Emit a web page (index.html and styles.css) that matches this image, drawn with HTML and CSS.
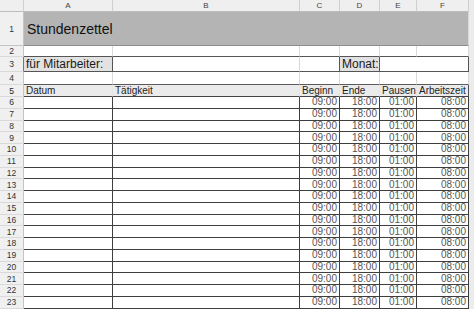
FILE: index.html
```html
<!DOCTYPE html>
<html lang="de">
<head>
    <meta charset="UTF-8">
    <meta name="viewport" content="width=device-width, initial-scale=1.0">
    <title>Stundenzettel</title>
    <link rel="stylesheet" href="styles.css">
</head>
<body>
    <div class="window">
        <table class="sheet">
            <colgroup>
                <col class="col-rh">
                <col class="col-a">
                <col class="col-b">
                <col class="col-c">
                <col class="col-d">
                <col class="col-e">
                <col class="col-f">
            </colgroup>
            <thead>
                <tr class="row-head">
                    <th class="corner"></th>
                    <th>A</th>
                    <th>B</th>
                    <th>C</th>
                    <th>D</th>
                    <th>E</th>
                    <th>F</th>
                </tr>
            </thead>
            <tbody id="rows">
                <tr class="row-title">
                    <td class="rh">1</td>
                    <td class="title" colspan="6">Stundenzettel</td>
                </tr>
                <tr class="row-2">
                    <td class="rh">2</td>
                    <td></td><td></td><td></td><td></td><td></td><td></td>
                </tr>
                <tr class="row-3">
                    <td class="rh">3</td>
                    <td class="label box">für Mitarbeiter:</td>
                    <td class="box"></td>
                    <td class="box"></td>
                    <td class="label box">Monat:</td>
                    <td class="box" colspan="2"></td>
                </tr>
                <tr class="row-4">
                    <td class="rh">4</td>
                    <td></td><td></td><td></td><td></td><td></td><td></td>
                </tr>
                <tr class="row-5">
                    <td class="rh">5</td>
                    <td>Datum</td>
                    <td>Tätigkeit</td>
                    <td>Beginn</td>
                    <td>Ende</td>
                    <td>Pausen</td>
                    <td>Arbeitszeit</td>
                </tr>
            </tbody>
        </table>
    </div>

    <script>
        // Fill rows 6-23 with the default shift
        const tbody = document.getElementById('rows');
        for (let n = 6; n <= 23; n++) {
            const tr = document.createElement('tr');
            tr.className = 'row-data';
            tr.innerHTML =
                '<td class="rh">' + n + '</td>' +
                '<td></td><td></td>' +
                '<td class="time">09:00</td>' +
                '<td class="time">18:00</td>' +
                '<td class="time">01:00</td>' +
                '<td class="time">08:00</td>';
            tbody.appendChild(tr);
        }
    </script>
</body>
</html>
```

FILE: styles.css
```css
body {
    margin: 0;
    padding: 0;
    background: #ffffff;
    font-family: "Liberation Sans", Arial, sans-serif;
    color: #222;
    overflow: hidden;
}
.window {
    width: 474px;
    height: 309px;
    overflow: hidden;
    background: #ececec;
}
.sheet {
    table-layout: fixed;
    border-collapse: separate;
    border-spacing: 0;
    width: 469px;
    background: #ffffff;
}
.col-rh { width: 24px; }
.col-a { width: 89px; }
.col-b { width: 187px; }
.col-c { width: 40px; }
.col-d { width: 40px; }
.col-e { width: 37px; }
.col-f { width: 52px; }

th, td {
    box-sizing: border-box;
    padding: 0 2px;
    border-right: 1px solid #d9d9d9;
    border-bottom: 1px solid #d9d9d9;
    white-space: nowrap;
    overflow: hidden;
    font-size: 10px;
    line-height: 10px;
    text-align: left;
}

/* column letters */
.row-head { height: 12px; }
.row-head th {
    background: #efefef;
    color: #444;
    font-size: 8px;
    font-weight: normal;
    text-align: center;
    border-right-color: #cfcfcf;
    border-bottom-color: #bdbdbd;
}

/* row numbers */
.rh {
    background: #f0f0f0;
    color: #333;
    font-size: 8.5px;
    text-align: center;
    padding: 0;
    border-right-color: #c4c4c4;
}

.row-title { height: 34px; }
.title {
    background: #b4b4b4;
    font-size: 14px;
    color: #111;
    padding-left: 3px;
    border-bottom-color: #8e8e8e;
}
.row-title .rh { border-bottom-color: #c4c4c4; }

.row-2 { height: 11px; }
.row-2 td { border-bottom-color: #555; }
.row-2 .rh { border-bottom-color: #d9d9d9; }

.row-3 { height: 15px; }
.row-3 td {
    font-size: 12px;
    line-height: 12px;
    border-bottom-color: #555;
}
.row-3 .rh {
    font-size: 8.5px;
    border-bottom-color: #d9d9d9;
    border-right-color: #777;
}
.row-3 .label {
    background: #e2e2e2;
    color: #1a1a1a;
    border-right-color: #555;
}
.row-3 td:nth-child(3) { border-right-color: #d9d9d9; }
.row-3 td:nth-child(4),
.row-3 td:nth-child(6) { border-right-color: #555; }

.row-4 { height: 13px; }
.row-4 td { border-bottom-color: #5a5a5a; }
.row-4 .rh { border-bottom-color: #d9d9d9; }

.row-5 { height: 12px; }
.row-5 td {
    background: #ebebeb;
    color: #1e1e1e;
    border-bottom-color: #444;
    border-right-color: #e6e6e6;
}
.row-5 .rh {
    background: #f0f0f0;
    border-right-color: #c4c4c4;
    border-bottom-color: #d9d9d9;
}
.row-5 td:last-child { border-right-color: #555; }

.row-data { height: 11.76px; }
.row-data td {
    border-bottom-color: #3e3e3e;
    border-right-color: #3e3e3e;
}
.row-data .rh {
    border-bottom-color: #d9d9d9;
    border-right-color: #c4c4c4;
}
.time {
    text-align: right;
    color: #555;
}
```
